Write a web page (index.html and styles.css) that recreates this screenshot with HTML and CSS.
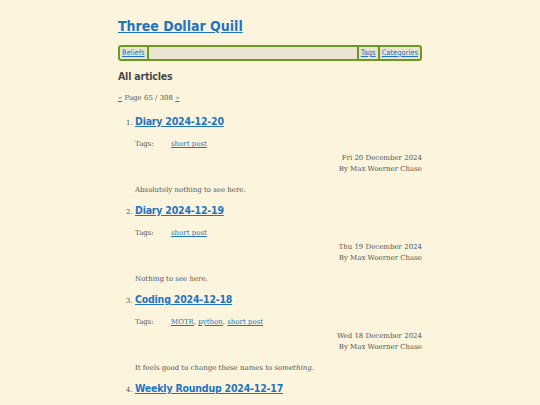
FILE: index.html
```html
<!DOCTYPE html>
<html lang="en">
<head>
<meta charset="utf-8">
<title>Three Dollar Quill</title>
<link rel="stylesheet" href="styles.css">
</head>
<body>
<div class="page">
  <header class="site-header">
    <h1 class="site-title"><a href="#">Three Dollar Quill</a></h1>
    <nav class="nav">
      <a class="nav-link nav-left" href="#">Beliefs</a>
      <span class="nav-fill"></span>
      <a class="nav-link nav-right" href="#">Tags</a>
      <a class="nav-link nav-right" href="#">Categories</a>
    </nav>
  </header>
  <main>
    <h2 class="section-title">All articles</h2>
    <p class="pager"><a href="#">«</a> Page 65 / 308 <a href="#">»</a></p>
    <ol class="articles" start="1">
      <li class="article">
        <h3 class="article-title"><a href="#">Diary 2024-12-20</a></h3>
        <div class="tags"><span class="tags-label">Tags:</span><span class="tags-list"><a href="#">short post</a></span></div>
        <div class="meta">
          <div>Fri 20 December 2024</div>
          <div>By Max Woerner Chase</div>
        </div>
        <p class="summary">Absolutely nothing to see here.</p>
      </li>
      <li class="article">
        <h3 class="article-title"><a href="#">Diary 2024-12-19</a></h3>
        <div class="tags"><span class="tags-label">Tags:</span><span class="tags-list"><a href="#">short post</a></span></div>
        <div class="meta">
          <div>Thu 19 December 2024</div>
          <div>By Max Woerner Chase</div>
        </div>
        <p class="summary">Nothing to see here.</p>
      </li>
      <li class="article">
        <h3 class="article-title"><a href="#">Coding 2024-12-18</a></h3>
        <div class="tags"><span class="tags-label">Tags:</span><span class="tags-list"><a href="#">MOTR</a>, <a href="#">python</a>, <a href="#">short post</a></span></div>
        <div class="meta">
          <div>Wed 18 December 2024</div>
          <div>By Max Woerner Chase</div>
        </div>
        <p class="summary">It feels good to change these names to <em>something</em>.</p>
      </li>
      <li class="article">
        <h3 class="article-title"><a href="#">Weekly Roundup 2024-12-17</a></h3>
      </li>
    </ol>
  </main>
</div>
</body>
</html>
```
FILE: styles.css
```css
html, body {
  margin: 0;
  padding: 0;
  background: #fcf4dc;
}
body {
  font-family: "DejaVu Serif", serif;
  font-size: 7px;
  color: #555555;
}
a {
  color: #1f74c4;
}
.page {
  width: 304px;
  margin: 0 auto;
}
.site-header {
  padding-top: 14px;
}
.site-title {
  margin: 0;
  font-family: "DejaVu Sans Condensed", "DejaVu Sans", sans-serif;
  font-weight: 700;
  font-size: 14px;
  line-height: 24px;
}
.site-title a {
  color: #1f74c4;
}
.nav {
  margin-top: 7px;
  display: flex;
  align-items: stretch;
  height: 12px;
  border: 2px solid #6b9a23;
  border-radius: 3px;
  background: #ebe4d0;
  font-family: "DejaVu Sans Condensed", "DejaVu Sans", sans-serif;
  font-size: 7.5px;
  line-height: 12px;
}
.nav-link {
  padding: 0 2px;
  color: #1f74c4;
}
.nav-left {
  border-right: 2px solid #6b9a23;
}
.nav-right {
  border-left: 2px solid #6b9a23;
}
.nav-fill {
  flex: 1;
}
.section-title {
  margin: 7px 0 0;
  font-family: "DejaVu Sans Condensed", "DejaVu Sans", sans-serif;
  font-weight: 700;
  font-size: 10.5px;
  letter-spacing: -0.2px;
  line-height: 16px;
  color: #4a4a4a;
}
.pager {
  margin: 9px 0 0;
  line-height: 10px;
  font-size: 7px;
}
.articles {
  margin: 10px 0 0;
  padding-left: 17px;
}
.article::marker {
  font-size: 7px;
  color: #555;
}
.article-title {
  margin: 0;
  font-family: "DejaVu Sans Condensed", "DejaVu Sans", sans-serif;
  font-weight: 700;
  font-size: 10.5px;
  letter-spacing: -0.2px;
  line-height: 16px;
}
.tags {
  display: flex;
  margin-top: 10px;
  line-height: 10px;
}
.tags-label {
  width: 36px;
}
.meta {
  text-align: right;
  margin-top: 4px;
  line-height: 11px;
}
.summary {
  margin: 10px 0 7px;
  line-height: 10px;
}
```
